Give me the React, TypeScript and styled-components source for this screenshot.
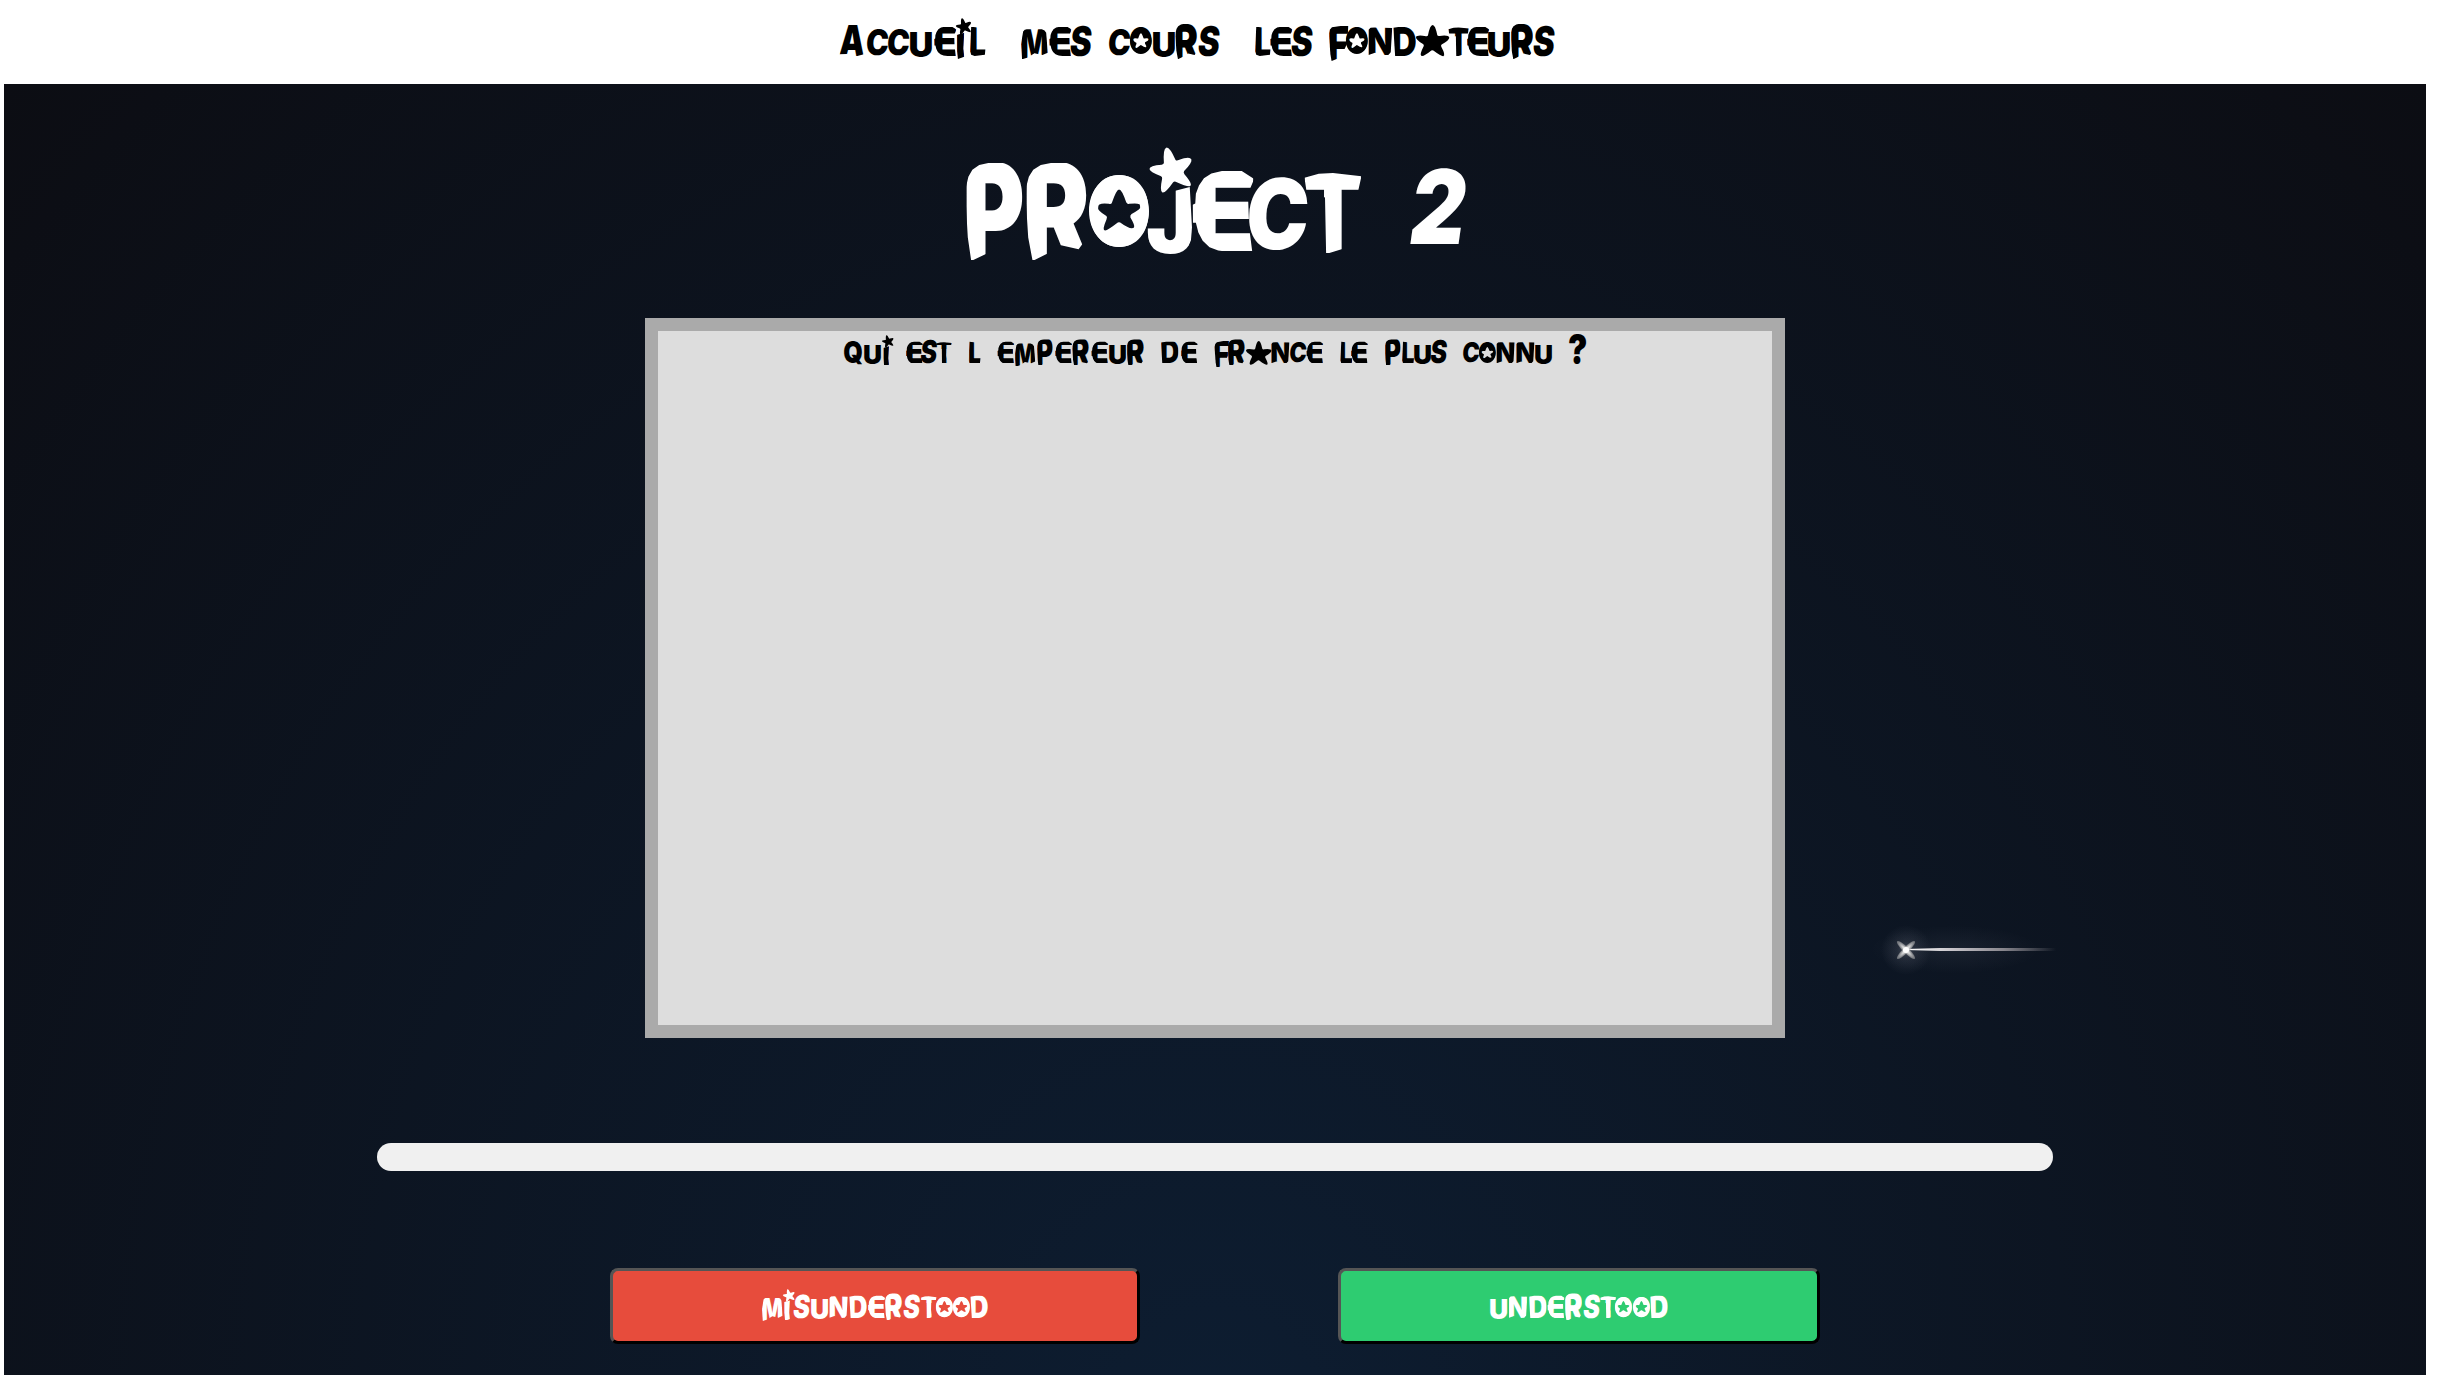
import React from "react";
import styled, { createGlobalStyle } from "styled-components";

const GlobalStyle = createGlobalStyle`
  html, body { margin: 0; background: #fff; overflow: hidden; }
  * { box-sizing: border-box; }
`;

/* Hand-drawn display lettering: every letter is fitted to an ink box.
   Values are hundredths of an em: advance, ink width, top, bottom. */
type Shape = { adv: number; w: number; top: number; bottom: number; weight?: number; clip?: string; skew?: number };

const SHAPES: Record<string, Shape> = {
  A: { adv: 70, w: 68, top: 20, bottom: 106, skew: -3, clip: "polygon(0 0,100% 0,100% 94%,70% 100%,30% 93%,0 94%)" },
  B: { adv: 64, w: 63, top: 24, bottom: 105 },
  C: { adv: 57, w: 58, top: 30, bottom: 103, skew: -4 },
  D: { adv: 64, w: 63, top: 24, bottom: 105, clip: "polygon(0 4%,30% 0,100% 0,100% 100%,8% 100%)" },
  E: { adv: 59, w: 62, top: 24, bottom: 105, clip: "polygon(0 42%,5% 40%,6% 28%,11% 18%,19% 9%,31% 3%,48% 0,80% 0,100% 10%,90% 28%,92% 70%,97% 100%,60% 100%,42% 98%,28% 94%,17% 86%,10% 76%,6% 64%,1% 64%)" },
  F: { adv: 47, w: 54, top: 22, bottom: 119, clip: "polygon(0 22%,5% 11%,16% 4%,60% 0,100% 0,94% 50%,60% 90%,14% 100%,8% 80%)" },
  I: { adv: 33, w: 21, top: 41, bottom: 113, clip: "polygon(0 8%,100% 0,88% 60%,100% 92%,16% 100%,0 60%)" },
  J: { adv: 47, w: 45, top: 40, bottom: 107, clip: "polygon(0 0,50% 8%,95% 0,100% 60%,98% 80%,90% 93%,80% 100%,0 100%)" },
  L: { adv: 42, w: 44, top: 24, bottom: 105, clip: "polygon(8% 0,60% 4%,60% 60%,100% 66%,94% 96%,30% 100%,8% 96%,0 84%)" },
  M: { adv: 77, w: 74, top: 31, bottom: 114, clip: "polygon(8% 8%,14% 2%,22% 0,78% 0,88% 4%,94% 12%,100% 78%,80% 86%,50% 80%,26% 94%,4% 100%,0 50%)" },
  N: { adv: 71, w: 68, top: 26, bottom: 104, clip: "polygon(4% 8%,12% 1%,26% 0,100% 2%,94% 88%,84% 98%,66% 100%,30% 90%,4% 98%)" },
  O: { adv: 60, w: 60, top: 28, bottom: 100, weight: 400 },
  P: { adv: 62, w: 57, top: 16, bottom: 114, clip: "polygon(0 36%,1% 24%,5% 14%,12% 7%,24% 2%,40% 0,100% 0,100% 80%,46% 90%,10% 100%,4% 76%)" },
  Q: { adv: 68, w: 66, top: 26, bottom: 112 },
  R: { adv: 65, w: 63, top: 16, bottom: 114, clip: "polygon(0 36%,1% 24%,5% 14%,12% 7%,24% 2%,40% 0,100% 0,100% 74%,84% 88%,56% 84%,42% 90%,11% 100%,4% 76%)" },
  S: { adv: 57, w: 56, top: 23, bottom: 108, skew: -6 },
  T: { adv: 51, w: 57, top: 26, bottom: 107, clip: "polygon(0 6%,25% 1%,50% 0,100% 4%,93% 26%,68% 30%,66% 60%,75% 92%,38% 100%,36% 30%,6% 34%)" },
  U: { adv: 62, w: 61, top: 38, bottom: 108 },
  "2": { adv: 53, w: 50, top: 22, bottom: 98, skew: -8 },
  "?": { adv: 62, w: 62, top: 0, bottom: 112 },
};

const STAR_A: Shape = { adv: 88, w: 91, top: 20, bottom: 104, weight: 900 };
const FAMILY = "Inter, 'Open Sans', sans-serif";

const ctx = document.createElement("canvas").getContext("2d")!;

function fit(ch: string, w: number, h: number, weight: number) {
  ctx.font = `${weight} 100px ${FAMILY}`;
  const m = ctx.measureText(ch);
  const inkW = m.actualBoundingBoxLeft + m.actualBoundingBoxRight;
  const inkH = m.actualBoundingBoxAscent + m.actualBoundingBoxDescent;
  const baseline =
    (100 - m.fontBoundingBoxAscent - m.fontBoundingBoxDescent) / 2 + m.fontBoundingBoxAscent;
  const sx = w / inkW;
  const sy = h / inkH;
  const tx = (m.actualBoundingBoxLeft * sx) / 100;
  const ty = (-(baseline - m.actualBoundingBoxAscent) * sy) / 100;
  return `translate(${tx}em, ${ty}em) scale(${sx}, ${sy})`;
}

const Line = styled.span<{ $size: number; $color: string }>`
  display: inline-flex;
  align-items: flex-start;
  height: 1.2em;
  font-family: ${FAMILY};
  font-size: ${(p) => p.$size}px;
  font-weight: 900;
  line-height: 1;
  text-align: left;
  color: ${(p) => p.$color};
`;
const Word = styled.span`
  display: flex;
  flex: none;
`;
const Space = styled.span<{ $w: number }>`
  flex: none;
  width: ${(p) => p.$w}em;
  white-space: pre;
  overflow: hidden;
`;
const Cell = styled.span<{ $w: number }>`
  position: relative;
  display: block;
  flex: none;
  width: ${(p) => p.$w}em;
`;
const Ink = styled.span<{ $s: Shape }>`
  display: block;
  width: ${(p) => p.$s.w / 100}em;
  height: ${(p) => (p.$s.bottom - p.$s.top) / 100}em;
  margin-top: ${(p) => p.$s.top / 100}em;
  clip-path: ${(p) => p.$s.clip ?? "none"};
  transform: skewX(${(p) => p.$s.skew ?? 0}deg);
  font-weight: ${(p) => p.$s.weight ?? 900};
`;
const Glyph = styled.span`
  display: block;
  width: 1em;
  height: 1em;
  transform-origin: 0 0;
`;
const Ornament = styled.svg<{ $x: number; $y: number; $w: number; $h: number }>`
  position: absolute;
  left: ${(p) => p.$x / 100}em;
  top: ${(p) => p.$y / 100}em;
  width: ${(p) => p.$w / 100}em;
  height: ${(p) => p.$h / 100}em;
  fill: currentColor;
  overflow: visible;
`;

const STAR =
  "M50 0Q58 0 64 33Q66 36 71 35Q99 31 100 41Q100 49 77 63Q74 66 76 70Q90 98 82 100Q76 101 52 82Q49 80 46 82Q22 103 16 99Q10 95 23 68Q25 64 21 61Q-1 46 0 39Q2 31 30 36Q35 37 36 33Q42 0 50 0Z";
const RING =
  "M50 0C78 0 100 22 100 50C100 78 78 100 50 100C22 100 0 78 0 50C0 22 22 0 50 0Z" +
  "M50 20Q45 21 38 39Q37 41 33 40Q15 38 14 45Q14 49 29 57Q31 58 29 62Q21 77 27 77Q31 77 48 66Q50 65 52 66Q70 77 75 73Q77 70 69 59Q68 56 71 54Q87 47 87 43Q86 38 67 40Q64 41 62 38Q55 20 50 20Z";

function Letter({ ch, width, starA }: { ch: string; width: number; starA: boolean }) {
  const base = starA && ch === "A" ? STAR_A : SHAPES[ch];
  const asStar = base === STAR_A;
  /* The star letter keeps a small capital inside its body. */
  const inkShape = asStar ? { ...base, w: 26, top: 48, bottom: 80 } : base;
  return (
    <Cell $w={width / 100}>
      <Ink $s={inkShape} style={asStar ? { marginLeft: "0.32em" } : undefined}>
        <Glyph style={{ transform: fit(ch, inkShape.w, inkShape.bottom - inkShape.top, inkShape.weight ?? 900) }}>
          {ch}
        </Glyph>
      </Ink>
      {asStar && (
        <Ornament $x={-1} $y={20} $w={92} $h={86} viewBox="0 0 100 100" preserveAspectRatio="none">
          <path d={STAR} />
        </Ornament>
      )}
      {ch === "O" && (
        <Ornament $x={0} $y={28} $w={60} $h={72} viewBox="0 0 100 100" preserveAspectRatio="none">
          <path fillRule="evenodd" d={RING} />
        </Ornament>
      )}
      {(ch === "I" || ch === "J") && (
        <Ornament
          $x={ch === "J" ? 3 : -3}
          $y={0}
          $w={43}
          $h={43}
          viewBox="0 0 100 100"
          preserveAspectRatio="none"
        >
          <path d={STAR} transform="rotate(-14 50 50)" />
        </Ornament>
      )}
    </Cell>
  );
}

/* Each entry is a word and its width in hundredths of an em. */
type WordSpec = [string, number];

function Lettering({ words, gap, size, color, starA = false }: {
  words: WordSpec[]; gap: number; size: number; color: string; starA?: boolean;
}) {
  return (
    <Line $size={size} $color={color}>
      {words.map(([text, total], i) => {
        const chars = [...text];
        const shapes = chars.map((c) => (starA && c === "A" ? STAR_A : SHAPES[c]));
        const last = chars.length - 1;
        const natural = shapes.reduce((sum, s, k) => sum + (k === last ? s.w : s.adv), 0);
        const extra = last > 0 ? (total - natural) / last : 0;
        return (
          <React.Fragment key={i}>
            {i > 0 && <Space $w={gap / 100}> </Space>}
            <Word>
              {chars.map((c, k) => (
                <Letter key={k} ch={c} starA={starA} width={k === last ? shapes[k].w : shapes[k].adv + extra} />
              ))}
            </Word>
          </React.Fragment>
        );
      })}
    </Line>
  );
}

const Page = styled.div`
  width: 2441px;
  height: 1375px;
  padding: 0 15px 0 4px;
  display: flex;
  flex-direction: column;
  overflow: hidden;
  background: #fff;
`;
const Nav = styled.nav`
  height: 84px;
  padding: 18px 0 0 836px;
  display: flex;
  flex: none;
`;
const NavLink = styled.a<{ $advance: number }>`
  display: block;
  width: ${(p) => p.$advance}px;
  flex: none;
  text-decoration: none;
`;
const Main = styled.main`
  position: relative;
  flex: 1;
  display: flex;
  flex-direction: column;
  align-items: center;
  background: radial-gradient(ellipse at bottom, #0d1d31 0%, #0c0d13 100%) top / 100% calc(100% + 60px) no-repeat;
`;
const Title = styled.h1`
  margin: 0;
  padding-top: 63px;
  height: 234px;
  font-size: 0;
`;
const Card = styled.section`
  width: 1140px;
  height: 720px;
  border: 13px solid #aaa;
  background: #ddd;
  padding-top: 4px;
  text-align: center;
  font-size: 0;
`;
const Progress = styled.div`
  width: 1676px;
  height: 28px;
  margin-top: 105px;
  border-radius: 14px;
  background: #f0f0f0;
`;
const Actions = styled.div`
  display: flex;
  width: 1210px;
  justify-content: space-between;
  margin-top: 97px;
`;
const Action = styled.button<{ $bg: string; $w: number }>`
  width: ${(p) => p.$w}px;
  height: 76px;
  padding: 18px 0 0;
  display: flex;
  justify-content: center;
  align-items: flex-start;
  border: 3px solid;
  border-color: #555 #000 #000 #555;
  border-radius: 8px;
  background: ${(p) => p.$bg};
`;
const ShootingStar = styled.svg`
  position: absolute;
  left: 1856px;
  top: 816px;
  width: 220px;
  height: 100px;
`;

export default function App() {
  return (
    <Page>
      <GlobalStyle />
      <Nav>
        <NavLink $advance={181}>
          <Lettering words={[["ACCUEIL", 403]]} gap={50} size={36.2} color="#000" />
        </NavLink>
        <NavLink $advance={234}>
          <Lettering words={[["MES", 194], ["COURS", 305]]} gap={50} size={36.2} color="#000" />
        </NavLink>
        <NavLink $advance={300}>
          <Lettering words={[["LES", 157], ["FONDATEURS", 624]]} gap={47} size={36.2} color="#000" starA />
        </NavLink>
      </Nav>
      <Main>
        <Title>
          <Lettering words={[["PROJECT", 396], ["2", 50]]} gap={53} size={100} color="#fff" />
        </Title>
        <Card>
          <Lettering
            words={[
              ["QUI", 163], ["EST", 166], ["L", 44], ["EMPEREUR", 530], ["DE", 133],
              ["FRANCE", 394], ["LE", 100], ["PLUS", 223], ["CONNU", 321], ["?", 62],
            ]}
            gap={60.5}
            size={27.7}
            color="#000"
            starA
          />
        </Card>
        <Progress />
        <Actions>
          <Action $bg="#e74c3c" $w={530}>
            <Lettering words={[["MISUNDERSTOOD", 808]]} gap={50} size={28} color="#fff" />
          </Action>
          <Action $bg="#2ecc71" $w={482}>
            <Lettering words={[["UNDERSTOOD", 634]]} gap={50} size={28} color="#fff" />
          </Action>
        </Actions>
        <ShootingStar viewBox="0 0 220 100">
          <defs>
            <radialGradient id="glow">
              <stop offset="0" stopColor="#fff" stopOpacity="0.2" />
              <stop offset="0.35" stopColor="#dde" stopOpacity="0.09" />
              <stop offset="1" stopColor="#dde" stopOpacity="0" />
            </radialGradient>
            <radialGradient id="haze">
              <stop offset="0" stopColor="#dde" stopOpacity="0.06" />
              <stop offset="1" stopColor="#dde" stopOpacity="0" />
            </radialGradient>
            <linearGradient id="tail">
              <stop offset="0" stopColor="#fff" />
              <stop offset="0.3" stopColor="#c9c6cb" />
              <stop offset="0.65" stopColor="#88868d" />
              <stop offset="1" stopColor="#88868d" stopOpacity="0" />
            </linearGradient>
            <radialGradient id="ray">
              <stop offset="0" stopColor="#fff" />
              <stop offset="0.4" stopColor="#ddd" stopOpacity="0.9" />
              <stop offset="1" stopColor="#aaa" stopOpacity="0.5" />
            </radialGradient>
          </defs>
          <ellipse cx="95" cy="49.5" rx="85" ry="24" fill="url(#haze)" />
          <circle cx="46" cy="50" r="25" fill="url(#glow)" />
          <path d="M46 49L80 48H196V51H80L46 50Z" fill="url(#tail)" />
          <g fill="url(#ray)">
            <ellipse cx="46" cy="50" rx="12.5" ry="3" transform="rotate(45 46 50)" />
            <ellipse cx="46" cy="50" rx="12.5" ry="3" transform="rotate(-45 46 50)" />
          </g>
          <circle cx="46" cy="50" r="3" fill="#fff" />
        </ShootingStar>
      </Main>
    </Page>
  );
}
